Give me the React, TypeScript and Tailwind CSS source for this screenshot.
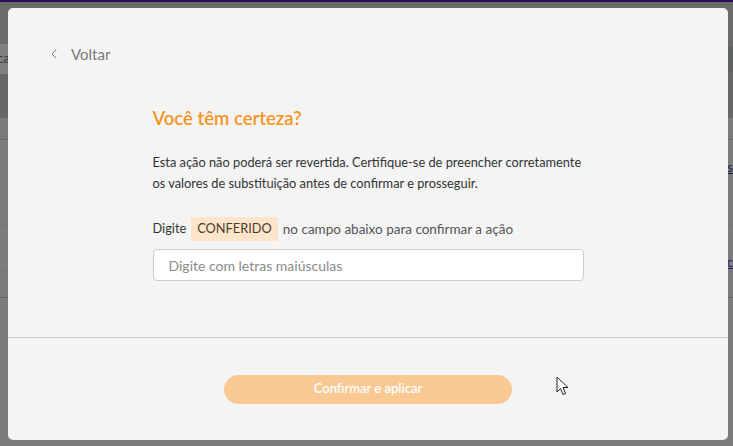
import { ChevronLeft } from 'lucide-react';

// Dimmed page rows peeking out behind the modal
function BackgroundPage() {
  return (
    <div className="flex h-full w-full flex-col bg-[#7c7c7c]">
      <div className="h-[2px] bg-[#2a0d50]" />
      <div className="h-[42px] bg-[#6b6b6b]" />
      <div className="flex h-[30px] items-center justify-between bg-[#6b6b6b]">
        <div className="flex h-full w-[120px] items-center bg-[#808080] text-[13px] text-[#3a3a3a]">
          <span className="-ml-[3px]">ca</span>
        </div>
        <div className="mr-[-8px] h-[27px] w-[40px] rounded-full bg-[#5e6461]" />
      </div>
      <div className="h-[44px] bg-[#676767]" />
      <div className="h-[22px] border-b border-[#6a6a6a] bg-[#7b7b7b]" />
      <div className="flex h-[41px] items-end justify-end border-b border-[#767676] pb-[6px]">
        <span className="text-[13px] leading-none text-[#1f2350] underline">s</span>
      </div>
      <div className="h-[45px] border-b border-[#767676]" />
      <div className="flex h-[46px] items-end justify-end border-b border-[#767676] pb-[2px]">
        <span className="text-[13px] leading-none text-[#2b1f6a] underline">c</span>
      </div>
      <div className="h-[26px] border-b border-[#5f5f5f]" />
      <div className="flex-1" />
    </div>
  );
}

export default function App() {
  return (
    <div
      className="relative h-[446px] w-[733px] overflow-hidden"
      style={{ fontFamily: 'Lato, "Open Sans", sans-serif' }}
    >
      <BackgroundPage />

      {/* Modal */}
      <div className="absolute left-[8px] top-[8px] flex h-[432px] w-[720px] flex-col rounded-[5px] bg-[#f4f4f4]">
        <div className="h-[330px] border-b border-[#c9c9c9]">
          <button className="flex items-center gap-[9px] pl-[38px] pt-[36px] text-[15px] leading-[20px] text-[#7a7a7a]">
            <ChevronLeft className="h-[16px] w-[16px]" strokeWidth={1.5} />
            <span>Voltar</span>
          </button>

          <div className="mx-auto mt-[42px] w-[431px]">
            <h2 className="text-[18.5px] font-semibold leading-[24px] text-[#f7931e]">Você têm certeza?</h2>

            <p className="mt-[22px] text-[12.8px] leading-[21px] text-[#333333]">
              Esta ação não poderá ser revertida. Certifique-se de preencher corretamente os valores de
              substituição antes de confirmar e prosseguir.
            </p>

            <div className="mt-[23px] flex items-center text-[12.8px] text-[#555555]">
              <span className="text-[#333333]">Digite</span>
              <span className="mx-[5px] flex h-[24px] items-center bg-[#fde5cc] px-[6px] text-[#4a3a2a]">
                CONFERIDO
              </span>
              <span className="text-[13.5px]">no campo abaixo para confirmar a ação</span>
            </div>

            <input
              className="mt-[8px] h-[32px] w-full rounded-[4px] border border-[#cccccc] bg-white px-[15px] text-[14px] text-[#333] outline-none placeholder:text-[#8a8a8a]"
              placeholder="Digite com letras maiúsculas"
            />
          </div>
        </div>

        <div className="flex flex-1 items-center justify-center">
          <button className="h-[29px] w-[288px] rounded-full bg-[#f8c993] text-[13px] font-semibold text-white">
            Confirmar e aplicar
          </button>
        </div>
      </div>

      {/* Mouse pointer */}
      <svg className="absolute left-[556px] top-[376px]" width="14" height="20" viewBox="0 0 14 20">
        <path d="M1 1 L1 16 L4.5 12.5 L7 18.5 L9.5 17.5 L7 11.5 L12 11.5 Z" fill="white" stroke="#222" strokeWidth="1" strokeLinejoin="round" />
      </svg>
    </div>
  );
}
